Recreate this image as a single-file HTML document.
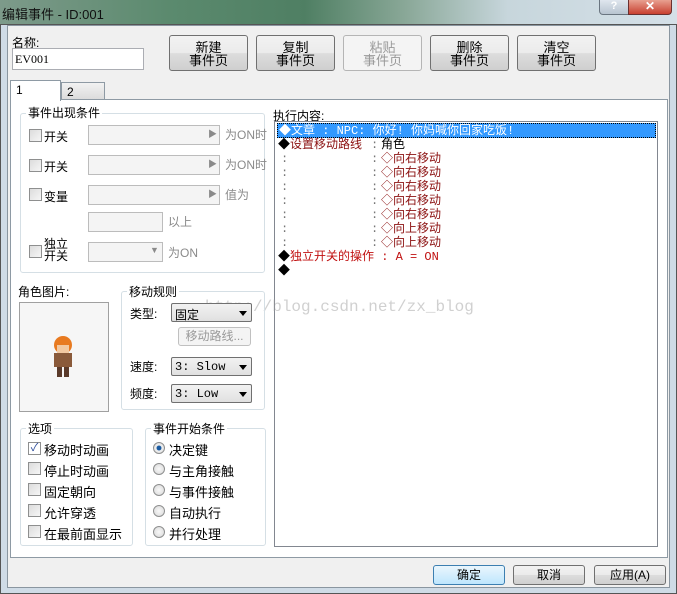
<!DOCTYPE html>
<html><head><meta charset="utf-8"><style>
*{box-sizing:border-box;margin:0;padding:0}
body{width:677px;height:594px;overflow:hidden;position:relative;font-family:"Liberation Sans","Noto Sans CJK SC",sans-serif;font-size:12px;color:#000;background:#5a7a68}
.a{position:absolute}
.title{left:0;top:0;width:677px;height:26px;background:linear-gradient(90deg,#7d9a8a 0%,#5b8a6e 25%,#4f7f63 45%,#8aa898 60%,#c7d6dc 75%,#d5e0e8 100%)}
.frame{left:0;top:24px;width:677px;height:570px;background:#cfdbe6;border:1px solid #555}
.client{left:7px;top:25px;width:663px;height:563px;background:#f0f0f0;border:1px solid #8a96a0}
.btn{border:1px solid #707070;border-radius:3px;background:linear-gradient(#f2f2f2 0%,#ebebeb 50%,#dddddd 51%,#cfcfcf 100%);text-align:center;font-size:13px;line-height:13px}
.grp{border:1px solid #d5dfe5;border-radius:3px}
.gl{background:#f0f0f0;padding:0 2px;font-size:12px}
.cb{width:13px;height:13px;border:1px solid #8e8f8f;background:linear-gradient(135deg,#dcdcdc,#f6f6f6)}
.dis{border:1px solid #bcbcbc;background:#f4f4f4}
.g{color:#8a8a8a}
.combo{border:1px solid #707070;border-radius:2px;background:linear-gradient(#f2f2f2,#e0e0e0);font-family:"Liberation Mono","Noto Sans CJK SC",monospace;font-size:12px;padding:2px 3px}
.combo:after{content:"";position:absolute;right:4px;top:7px;border:4px solid transparent;border-top:5px solid #000}
.rad{width:12px;height:12px;border:1px solid #8e8f8f;border-radius:50%;background:radial-gradient(#f8f8f8,#d8d8d8)}
.list{font-family:"Liberation Mono","Noto Sans CJK SC",monospace;font-size:12px;line-height:14px}
.list div,.list span{position:absolute;white-space:pre;height:14px}
.r{color:#8b1010}
.c{color:#777}
</style></head><body>
<div class="a title"></div>
<div class="a" style="left:2px;top:4px;font-size:13px;color:#111">编辑事件 - ID:001</div>
<div class="a" style="left:599px;top:0;width:30px;height:15px;border:1px solid #6a7580;border-top:none;border-radius:0 0 0 4px;background:linear-gradient(#dfe6ee,#b8c4d0);text-align:center;font-size:11px;color:#fff;font-weight:bold;line-height:13px">?</div>
<div class="a" style="left:628px;top:0;width:44px;height:15px;border:1px solid #6a3030;border-top:none;border-radius:0 0 4px 0;background:linear-gradient(#e8a090,#c84030);text-align:center;font-size:12px;color:#fff;font-weight:bold;line-height:13px">✕</div>
<div class="a frame"></div>
<div class="a client"></div>

<div class="a" style="left:12px;top:34px">名称:</div>
<div class="a" style="left:12px;top:48px;width:132px;height:22px;border:1px solid #abadb3;background:#fff;font-family:'Liberation Serif',serif;font-size:12px;padding:3px 2px">EV001</div>

<div class="a btn" style="left:169px;top:35px;width:79px;height:36px;padding-top:5px">新建<br>事件页</div>
<div class="a btn" style="left:256px;top:35px;width:79px;height:36px;padding-top:5px">复制<br>事件页</div>
<div class="a btn" style="left:343px;top:35px;width:79px;height:36px;padding-top:5px;color:#999;border-color:#b5b5b5;background:#f4f4f4">粘贴<br>事件页</div>
<div class="a btn" style="left:430px;top:35px;width:79px;height:36px;padding-top:5px">删除<br>事件页</div>
<div class="a btn" style="left:517px;top:35px;width:79px;height:36px;padding-top:5px">清空<br>事件页</div>

<div class="a" style="left:10px;top:99px;width:658px;height:459px;border:1px solid #8e9aa4;background:#fff"></div>
<div class="a" style="left:61px;top:82px;width:44px;height:18px;border:1px solid #8e9aa4;background:linear-gradient(#f2f2f2,#dcdcdc);padding:2px 5px">2</div>
<div class="a" style="left:10px;top:80px;width:51px;height:21px;border:1px solid #8e9aa4;border-bottom:none;background:#fff;padding:2px 5px">1</div>

<div class="a grp" style="left:20px;top:113px;width:245px;height:160px"></div>
<div class="a gl" style="left:26px;top:104px;background:#fff">事件出现条件</div>
<div class="a cb" style="left:29px;top:129px"></div><div class="a" style="left:44px;top:128px">开关</div>
<div class="a dis" style="left:88px;top:125px;width:132px;height:20px"></div><div class="a g" style="left:208px;top:127px;font-size:9px">▶</div><div class="a g" style="left:225px;top:126px">为ON时</div>
<div class="a cb" style="left:29px;top:159px"></div><div class="a" style="left:44px;top:158px">开关</div>
<div class="a dis" style="left:88px;top:155px;width:132px;height:20px"></div><div class="a g" style="left:208px;top:157px;font-size:9px">▶</div><div class="a g" style="left:225px;top:156px">为ON时</div>
<div class="a cb" style="left:29px;top:188px"></div><div class="a" style="left:44px;top:188px">变量</div>
<div class="a dis" style="left:88px;top:185px;width:132px;height:20px"></div><div class="a g" style="left:208px;top:187px;font-size:9px">▶</div><div class="a g" style="left:225px;top:186px">值为</div>
<div class="a dis" style="left:88px;top:212px;width:75px;height:20px"></div><div class="a g" style="left:168px;top:213px">以上</div>
<div class="a cb" style="left:29px;top:245px"></div><div class="a" style="left:44px;top:238px;line-height:12px">独立<br>开关</div>
<div class="a dis" style="left:88px;top:242px;width:75px;height:20px"></div><div class="a g" style="left:150px;top:245px;font-size:9px">▼</div><div class="a g" style="left:168px;top:244px">为ON</div>

<div class="a" style="left:273px;top:107px">执行内容:</div>
<div class="a list" style="left:274px;top:121px;width:384px;height:426px;border:1px solid #828790;background:#fff">
<div style="left:2px;top:1px;width:379px;height:15px;background:#3399ff;color:#fff;border:1px dotted #000;padding-left:1px">◆文章 : NPC: 你好! 你妈喊你回家吃饭!</div>
<span style="left:3px;top:16px">◆</span><span class="r" style="left:15px;top:16px">设置移动路线</span><span class="c" style="left:96px;top:16px">:</span><span style="left:106px;top:16px">角色</span>
<span class="c" style="left:6px;top:30px">:</span><span class="c" style="left:96px;top:30px">:</span><span class="r" style="left:106px;top:30px">◇向右移动</span>
<span class="c" style="left:6px;top:44px">:</span><span class="c" style="left:96px;top:44px">:</span><span class="r" style="left:106px;top:44px">◇向右移动</span>
<span class="c" style="left:6px;top:58px">:</span><span class="c" style="left:96px;top:58px">:</span><span class="r" style="left:106px;top:58px">◇向右移动</span>
<span class="c" style="left:6px;top:72px">:</span><span class="c" style="left:96px;top:72px">:</span><span class="r" style="left:106px;top:72px">◇向右移动</span>
<span class="c" style="left:6px;top:86px">:</span><span class="c" style="left:96px;top:86px">:</span><span class="r" style="left:106px;top:86px">◇向右移动</span>
<span class="c" style="left:6px;top:100px">:</span><span class="c" style="left:96px;top:100px">:</span><span class="r" style="left:106px;top:100px">◇向上移动</span>
<span class="c" style="left:6px;top:114px">:</span><span class="c" style="left:96px;top:114px">:</span><span class="r" style="left:106px;top:114px">◇向上移动</span>
<span style="left:3px;top:128px">◆</span><span style="left:15px;top:128px;color:#c01010">独立开关的操作 : A = ON</span>
<span style="left:3px;top:142px">◆</span>
</div>
<div class="a" style="left:205px;top:298px;font-family:'Liberation Mono',monospace;font-size:16px;color:rgba(150,150,150,.45)">http://blog.csdn.net/zx_blog</div>

<div class="a" style="left:18px;top:283px">角色图片:</div>
<div class="a" style="left:19px;top:302px;width:90px;height:110px;border:1px solid #a0a0a0;background:#f6f6f6"></div>
<svg class="a" style="left:50px;top:335px" width="26" height="46" viewBox="0 0 26 46">
<ellipse cx="13" cy="10" rx="9" ry="9" fill="#e87a20"/><rect x="7" y="10" width="12" height="8" fill="#f2c8a0"/>
<rect x="4" y="18" width="18" height="14" fill="#8a5a3a"/><rect x="7" y="32" width="5" height="10" fill="#5a3a2a"/><rect x="14" y="32" width="5" height="10" fill="#5a3a2a"/></svg>

<div class="a grp" style="left:121px;top:291px;width:144px;height:119px"></div>
<div class="a gl" style="left:127px;top:283px;background:#fff">移动规则</div>
<div class="a" style="left:130px;top:305px">类型:</div>
<div class="a combo" style="left:171px;top:303px;width:81px;height:19px">固定</div>
<div class="a btn" style="left:178px;top:327px;width:73px;height:19px;color:#999;border-color:#c0c0c0;background:#f4f4f4;font-size:12px;line-height:16px">移动路线...</div>
<div class="a" style="left:130px;top:358px">速度:</div>
<div class="a combo" style="left:171px;top:357px;width:81px;height:19px">3: Slow</div>
<div class="a" style="left:130px;top:385px">频度:</div>
<div class="a combo" style="left:171px;top:384px;width:81px;height:19px">3: Low</div>

<div class="a grp" style="left:20px;top:428px;width:113px;height:118px"></div>
<div class="a gl" style="left:26px;top:420px;background:#fff">选项</div>
<div class="a cb" style="left:28px;top:442px;background:#fff;font-size:11px;line-height:10px;color:#2a4a9a;text-align:center">✓</div><div class="a" style="left:44px;top:440px;font-size:13px">移动时动画</div>
<div class="a cb" style="left:28px;top:462px"></div><div class="a" style="left:44px;top:461px;font-size:13px">停止时动画</div>
<div class="a cb" style="left:28px;top:483px"></div><div class="a" style="left:44px;top:482px;font-size:13px">固定朝向</div>
<div class="a cb" style="left:28px;top:504px"></div><div class="a" style="left:44px;top:503px;font-size:13px">允许穿透</div>
<div class="a cb" style="left:28px;top:525px"></div><div class="a" style="left:44px;top:524px;font-size:13px">在最前面显示</div>

<div class="a grp" style="left:145px;top:428px;width:121px;height:118px"></div>
<div class="a gl" style="left:151px;top:420px;background:#fff">事件开始条件</div>
<div class="a rad" style="left:153px;top:442px;background:radial-gradient(#1a5aa0 30%,#f0f0f0 40%,#d8d8d8)"></div><div class="a" style="left:169px;top:440px;font-size:13px">决定键</div>
<div class="a rad" style="left:153px;top:463px"></div><div class="a" style="left:169px;top:461px;font-size:13px">与主角接触</div>
<div class="a rad" style="left:153px;top:484px"></div><div class="a" style="left:169px;top:482px;font-size:13px">与事件接触</div>
<div class="a rad" style="left:153px;top:505px"></div><div class="a" style="left:169px;top:503px;font-size:13px">自动执行</div>
<div class="a rad" style="left:153px;top:526px"></div><div class="a" style="left:169px;top:524px;font-size:13px">并行处理</div>

<div class="a btn" style="left:433px;top:565px;width:72px;height:20px;border-color:#3c7fb1;background:linear-gradient(#eaf6fd,#bee6fd);line-height:18px;font-size:12px">确定</div>
<div class="a btn" style="left:513px;top:565px;width:72px;height:20px;line-height:18px;font-size:12px">取消</div>
<div class="a btn" style="left:594px;top:565px;width:72px;height:20px;line-height:18px;font-size:12px">应用(A)</div>
</body></html>
